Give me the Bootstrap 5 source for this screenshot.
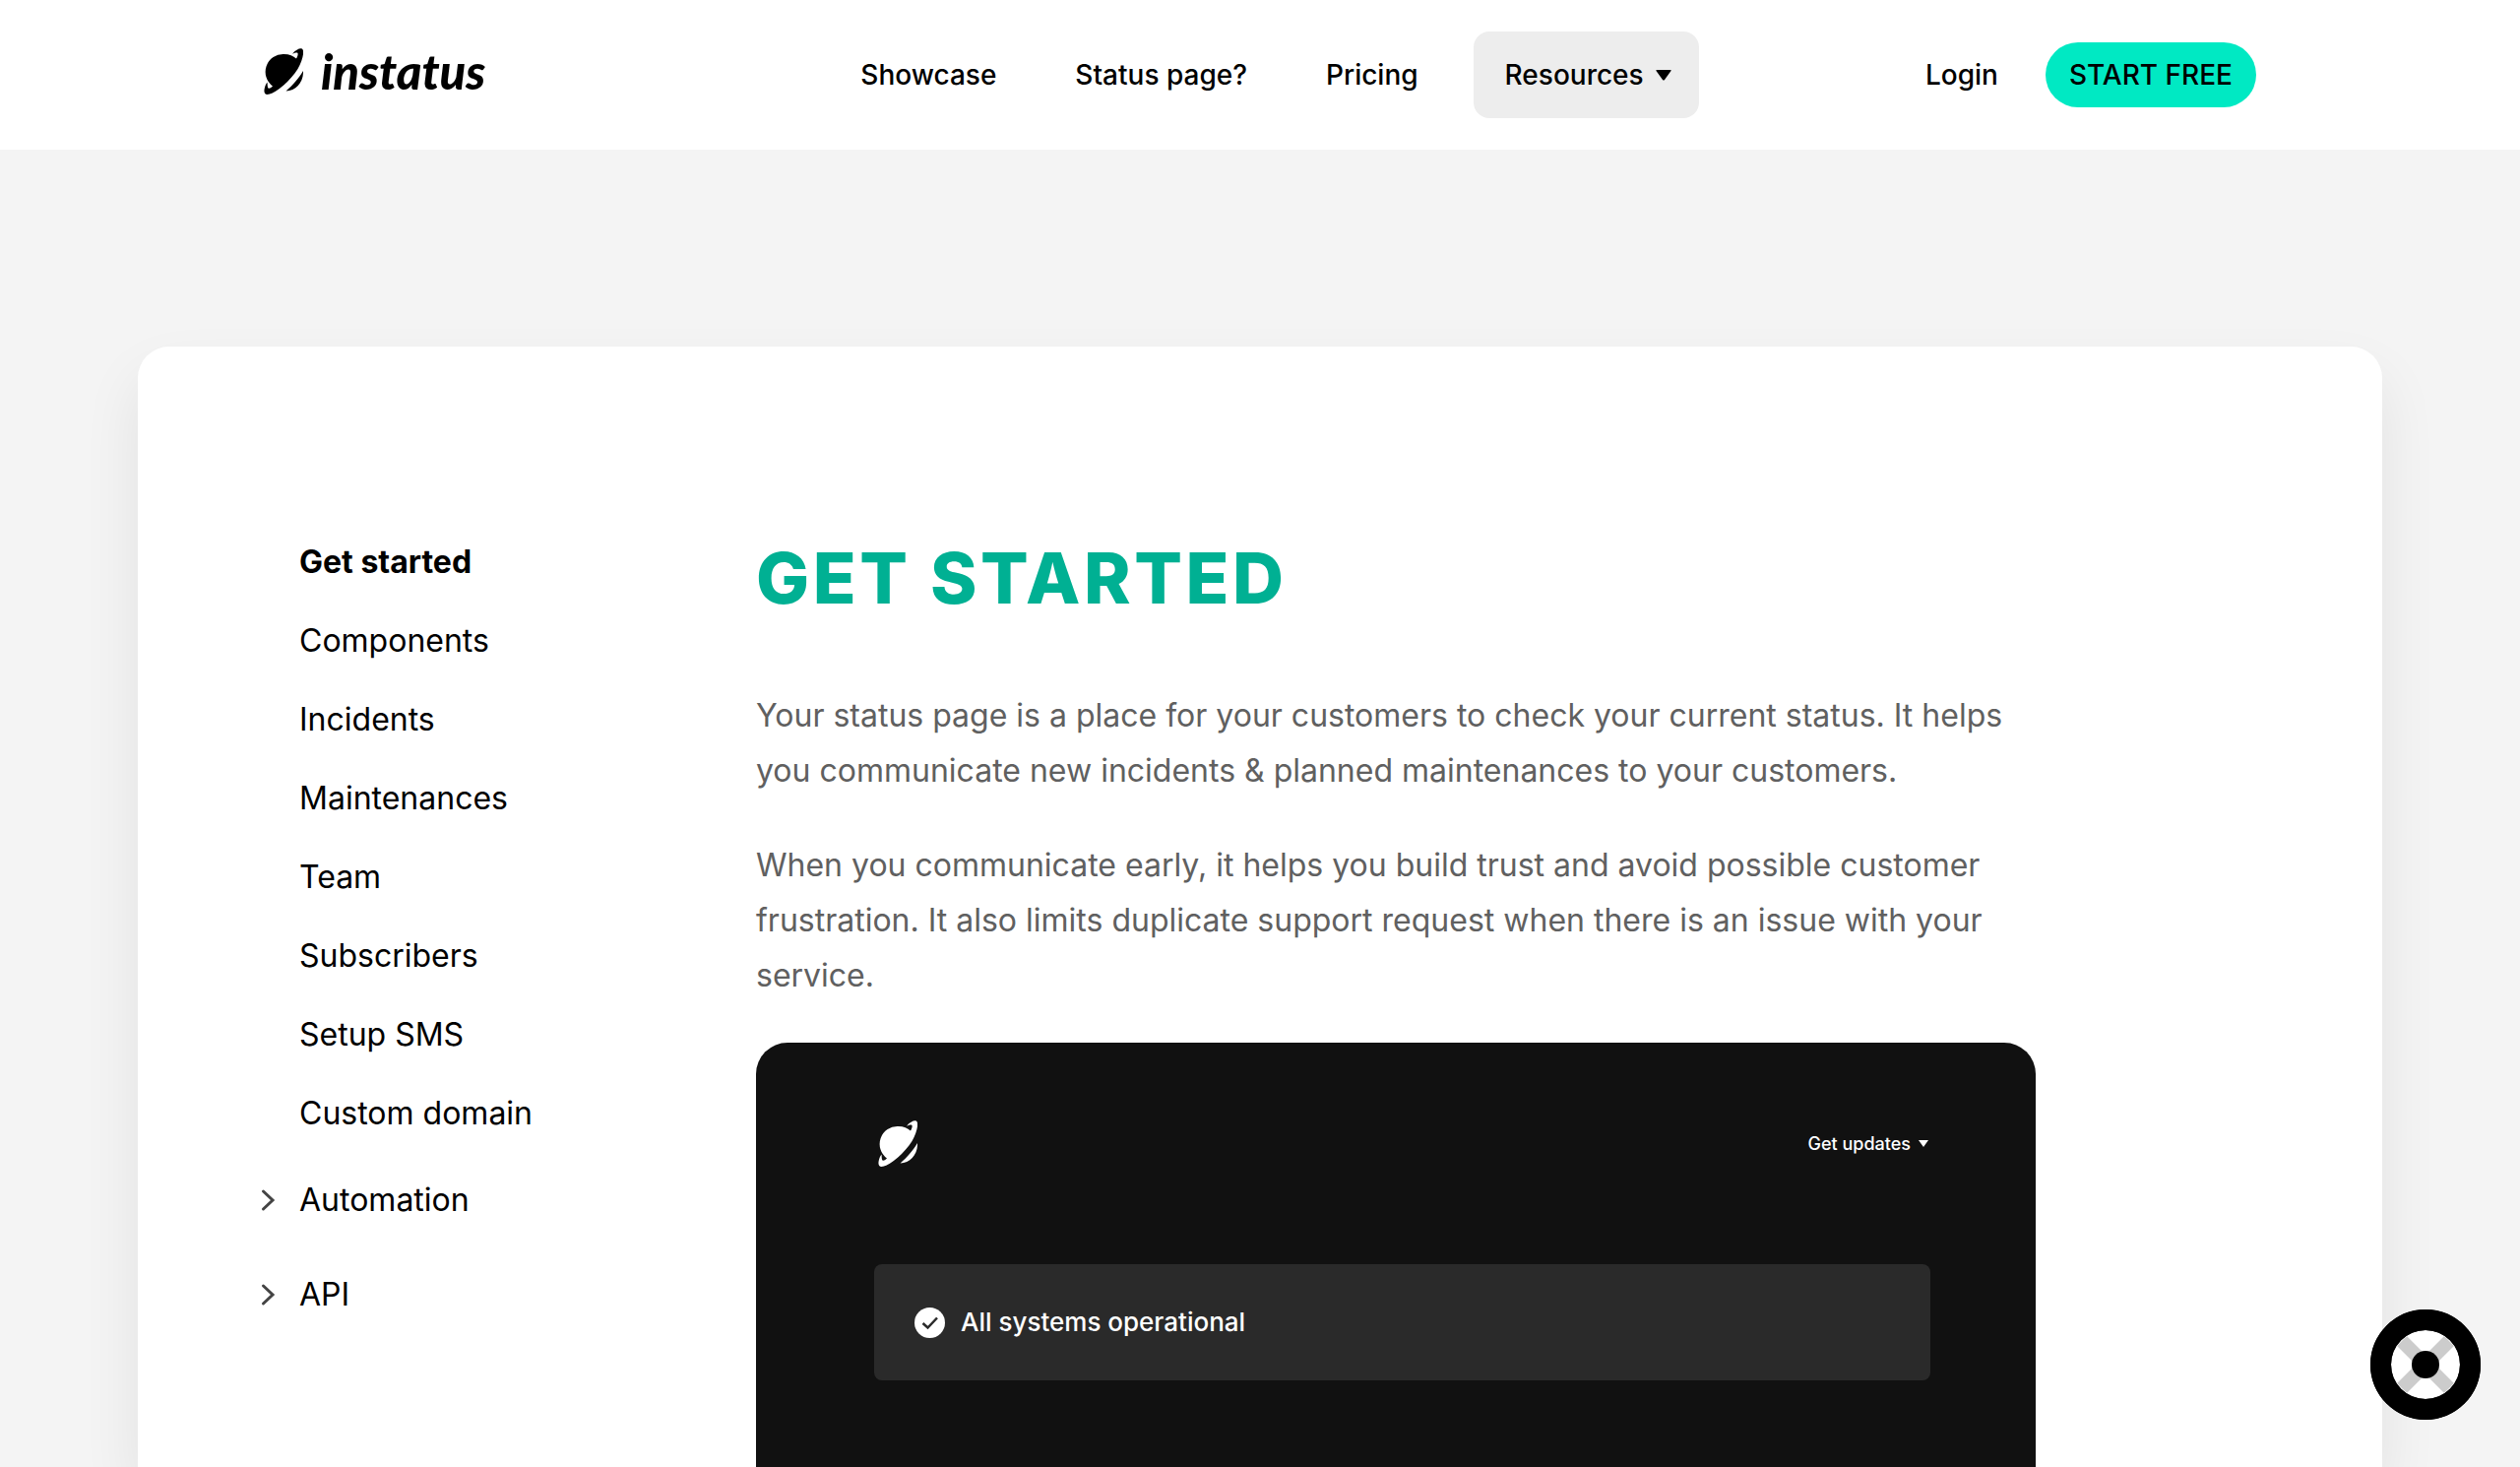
<!DOCTYPE html>
<html lang="en">
<head>
<meta charset="utf-8">
<meta name="viewport" content="width=device-width, initial-scale=1">
<title>Get started - Instatus</title>
<link href="https://cdn.jsdelivr.net/npm/bootstrap@5.3.0/dist/css/bootstrap.min.css" rel="stylesheet">
<style>
body { font-family: Inter, "Liberation Sans", sans-serif; font-size: 32px; line-height: 56px; background: #f4f4f4; color: #000; }
a { color: inherit; text-decoration: none; }
.site-header { background: #fff; height: 152px; }
.site-bar { max-width: 2024px; font-size: 28px; line-height: 40px; font-weight: 500; }
.bar-side { flex: 1 1 0; }
.brand { font-family: Lato, sans-serif; font-weight: 900; font-style: italic; font-size: 49px; line-height: 56px; gap: 18px; padding-bottom: 8px; color: #000; }
.planet { width: 40px; height: 47px; fill: currentColor; flex: none; }
.site-nav { gap: 16px; padding-left: 8px; }
.site-nav a { padding: 24px 32px; }
.site-nav .menu-btn { padding: 24px 28px 24px 32px; margin-left: 8px; background: #ededed; border: 0; border-radius: 16px; font-weight: 500; display: flex; align-items: center; gap: 12px; }
.start-btn { background: #00e9c3; border-radius: 33px; padding: 13px 24px; }
.account { gap: 48px; }
.doc-card { width: 100%; max-width: 2280px; margin-top: 200px; background: #fff; border-radius: 32px 32px 0 0; box-shadow: 0 30px 60px rgba(0,0,0,.08); padding: 191px 124px 0; }
.side { width: 504px; flex: none; }
.side a { display: flex; align-items: center; height: 56px; margin-bottom: 24px; padding-left: 40px; }
.side a.group-link { padding-left: 0; margin: 32px 0 40px; }
.side a.group-link svg { width: 16px; margin-right: 24px; }
.doc { max-width: 1300px; color: #606060; }
.doc h1 { font-size: 72px; line-height: 88px; font-weight: 800; color: #00b093; margin: 0 0 68px; letter-spacing: 0.05em; }
.doc p { margin-bottom: 40px; }
.mock { background: #111; color: #fff; border-radius: 32px 32px 0 0; padding: 79px 107px 0 120px; font-weight: 500; }
.updates { font-size: 18px; line-height: 24px; gap: 8px; margin-right: 2px; }
.state-box { background: #2a2a2a; border-radius: 8px; padding: 39px 41px; margin-top: 99px; font-size: 26px; line-height: 40px; gap: 16px; }
.help-btn { position: fixed; right: 40px; bottom: 48px; width: 112px; height: 112px; border: 0; padding: 0; background: none; }
</style>
<script src="https://cdn.jsdelivr.net/npm/bootstrap@5.3.0/dist/js/bootstrap.bundle.min.js"></script>
</head>
<body class="vh-100 overflow-hidden d-flex flex-column">
<svg class="d-none" aria-hidden="true">
  <symbol id="planet" viewBox="0 0 40 47">
    <path d="M29 5.700C32 2 36 0 38 .3C42 1 40 11 34.500 21C27 33 13 45 5 46.800C1 47.500 0 45 .6 41.500C1 39 2 36.500 3.500 34.500C3.800 37 3.500 39.500 4.500 40.500C5.500 41 7 40.500 9 38.500A18 18 0 0 1 20.500 6C26 6 30 8 33 10.500C34.500 8 35 6 34.300 4.800C33.500 4 31.500 4.600 29 5.700Z"/>
    <path d="M40 23C40.500 34 33 43.500 22.500 43.500C30 37 35 31 40 23Z"/>
  </symbol>
</svg>
<header class="site-header d-flex align-items-center flex-shrink-0">
  <div class="site-bar container-fluid p-0 d-flex align-items-center">
    <div class="bar-side d-flex">
      <a class="brand d-flex align-items-center" href="#"><svg class="planet"><use href="#planet"/></svg>instatus</a>
    </div>
    <nav class="site-nav d-flex align-items-center">
      <a href="#">Showcase</a>
      <a href="#">Status page?</a>
      <a href="#">Pricing</a>
      <button class="menu-btn" type="button">Resources <svg width="16" height="11" viewBox="0 0 16 11"><path d="M1 0H15Q16 0 15.500 1L9 10Q8 11 7 10L.5 1Q0 0 1 0Z"/></svg></button>
    </nav>
    <div class="bar-side account d-flex align-items-center justify-content-end">
      <a href="#">Login</a>
      <a class="start-btn" href="#">START FREE</a>
    </div>
  </div>
</header>
<main class="doc-card mx-auto d-flex flex-grow-1">
  <nav class="side" aria-label="Documentation">
    <a class="fw-bold" href="#">Get started</a>
    <a href="#">Components</a>
    <a href="#">Incidents</a>
    <a href="#">Maintenances</a>
    <a href="#">Team</a>
    <a href="#">Subscribers</a>
    <a href="#">Setup SMS</a>
    <a href="#">Custom domain</a>
    <a class="group-link" href="#"><svg height="24" viewBox="0 0 16 24" fill="none" stroke="#444" stroke-width="3" stroke-linecap="round"><path d="M3.500 3L13 12L3.500 21"/></svg>Automation</a>
    <a class="group-link" href="#"><svg height="24" viewBox="0 0 16 24" fill="none" stroke="#444" stroke-width="3" stroke-linecap="round"><path d="M3.500 3L13 12L3.500 21"/></svg>API</a>
  </nav>
  <article class="doc d-flex flex-column flex-grow-1">
    <h1>GET STARTED</h1>
    <p>Your status page is a place for your customers to check your current status. It helps you communicate new incidents &amp; planned maintenances to your customers.</p>
    <p>When you communicate early, it helps you build trust and avoid possible customer frustration. It also limits duplicate support request when there is an issue with your service.</p>
    <section class="mock flex-grow-1">
      <div class="d-flex align-items-center justify-content-between">
        <svg class="planet ms-1"><use href="#planet"/></svg>
        <a class="updates d-flex align-items-center" href="#">Get updates <svg width="10" height="7" viewBox="0 0 10 7" fill="#fff"><path d="M0 0H10L5 7Z"/></svg></a>
      </div>
      <div class="state-box d-flex align-items-center">
        <svg width="31" height="31" viewBox="0 0 31 31"><circle cx="15.500" cy="15.500" r="15.500" fill="#fff"/><path d="M8.500 16L13.500 20.500L23 10.500" fill="none" stroke="#2a2a2a" stroke-width="2.500"/></svg>
        <span>All systems operational</span>
      </div>
    </section>
  </article>
</main>
<button class="help-btn" type="button" aria-label="Help">
  <svg class="d-block" width="112" height="112" viewBox="0 0 112 112"><circle cx="56" cy="56" r="56"/><circle cx="56" cy="56" r="35" fill="#fff"/><path d="M32 32L80 80M80 32L32 80" stroke="#ccc" stroke-width="14"/><circle cx="56" cy="56" r="45.500" fill="none" stroke="#000" stroke-width="21"/><circle cx="56" cy="56" r="14"/></svg>
</button>
</body>
</html>
